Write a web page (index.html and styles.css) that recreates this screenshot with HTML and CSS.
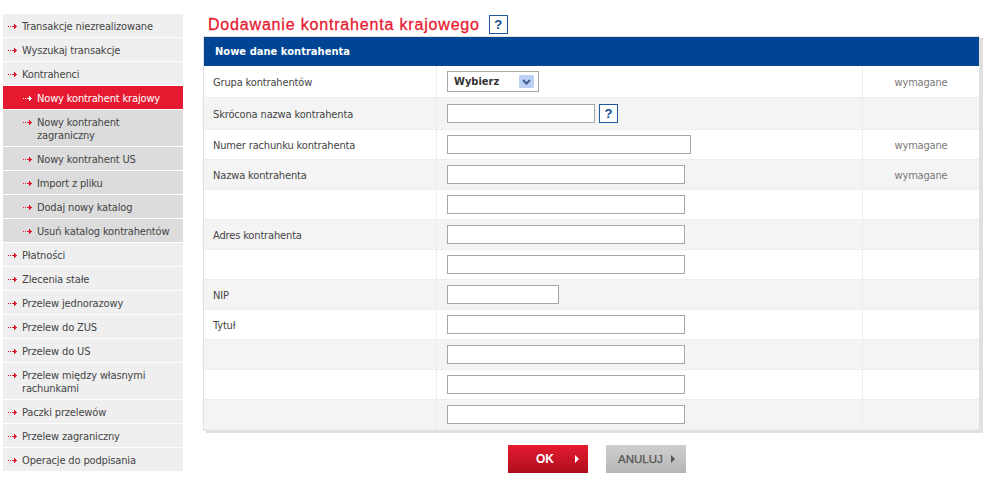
FILE: index.html
```html
<!DOCTYPE html>
<html lang="pl">
<head>
<meta charset="utf-8">
<title>Dodawanie kontrahenta krajowego</title>
<link rel="stylesheet" href="styles.css">
</head>
<body>
<svg class="defs" width="0" height="0" aria-hidden="true"><defs><symbol id="arr" viewBox="0 0 9 7"><path d="M0 3h1v1H0zM2 3h1v1H2zM4 3h2V1h1v1h1v1h1v1H8v1H7v1H6V4H4z"/></symbol></defs></svg>
<div class="page">
  <nav class="side">
    <a class="item"><svg class="arr"><use href="#arr"/></svg><span>Transakcje niezrealizowane</span></a>
    <a class="item"><svg class="arr"><use href="#arr"/></svg><span>Wyszukaj transakcje</span></a>
    <a class="item"><svg class="arr"><use href="#arr"/></svg><span>Kontrahenci</span></a>
    <a class="item sub active"><svg class="arr"><use href="#arr"/></svg><span>Nowy kontrahent krajowy</span></a>
    <a class="item sub"><svg class="arr"><use href="#arr"/></svg><span>Nowy kontrahent<br>zagraniczny</span></a>
    <a class="item sub"><svg class="arr"><use href="#arr"/></svg><span>Nowy kontrahent US</span></a>
    <a class="item sub"><svg class="arr"><use href="#arr"/></svg><span>Import z pliku</span></a>
    <a class="item sub"><svg class="arr"><use href="#arr"/></svg><span>Dodaj nowy katalog</span></a>
    <a class="item sub"><svg class="arr"><use href="#arr"/></svg><span>Usuń katalog kontrahentów</span></a>
    <a class="item"><svg class="arr"><use href="#arr"/></svg><span>Płatności</span></a>
    <a class="item"><svg class="arr"><use href="#arr"/></svg><span>Zlecenia stałe</span></a>
    <a class="item"><svg class="arr"><use href="#arr"/></svg><span>Przelew jednorazowy</span></a>
    <a class="item"><svg class="arr"><use href="#arr"/></svg><span>Przelew do ZUS</span></a>
    <a class="item"><svg class="arr"><use href="#arr"/></svg><span>Przelew do US</span></a>
    <a class="item"><svg class="arr"><use href="#arr"/></svg><span>Przelew między własnymi<br>rachunkami</span></a>
    <a class="item"><svg class="arr"><use href="#arr"/></svg><span>Paczki przelewów</span></a>
    <a class="item"><svg class="arr"><use href="#arr"/></svg><span>Przelew zagraniczny</span></a>
    <a class="item"><svg class="arr"><use href="#arr"/></svg><span>Operacje do podpisania</span></a>
  </nav>
  <main class="main">
    <div class="title-row">
      <h1>Dodawanie kontrahenta krajowego</h1>
      <span class="help">?</span>
    </div>
    <section class="panel">
      <h2>Nowe dane kontrahenta</h2>
      <div class="row tall"><div class="c1">Grupa kontrahentów</div><div class="c2"><div class="select"><b>Wybierz</b><span class="sel-btn"><svg width="9" height="6" viewBox="0 0 9 6"><path d="M1 1l3.5 3.5L8 1" fill="none" stroke="#3f5f8f" stroke-width="2"/></svg></span></div></div><div class="c3">wymagane</div></div>
      <div class="row tall alt low"><div class="c1">Skrócona nazwa kontrahenta</div><div class="c2"><div class="field w148"></div><span class="help small">?</span></div><div class="c3"></div></div>
      <div class="row"><div class="c1">Numer rachunku kontrahenta</div><div class="c2"><div class="field w244"></div></div><div class="c3">wymagane</div></div>
      <div class="row alt"><div class="c1">Nazwa kontrahenta</div><div class="c2"><div class="field w238"></div></div><div class="c3">wymagane</div></div>
      <div class="row"><div class="c1"></div><div class="c2"><div class="field w238"></div></div><div class="c3"></div></div>
      <div class="row alt"><div class="c1">Adres kontrahenta</div><div class="c2"><div class="field w238"></div></div><div class="c3"></div></div>
      <div class="row"><div class="c1"></div><div class="c2"><div class="field w238"></div></div><div class="c3"></div></div>
      <div class="row alt"><div class="c1">NIP</div><div class="c2"><div class="field w112"></div></div><div class="c3"></div></div>
      <div class="row"><div class="c1">Tytuł</div><div class="c2"><div class="field w238"></div></div><div class="c3"></div></div>
      <div class="row alt"><div class="c1"></div><div class="c2"><div class="field w238"></div></div><div class="c3"></div></div>
      <div class="row"><div class="c1"></div><div class="c2"><div class="field w238"></div></div><div class="c3"></div></div>
      <div class="row alt"><div class="c1"></div><div class="c2"><div class="field w238"></div></div><div class="c3"></div></div>
    </section>
    <div class="buttons">
      <a class="btn ok"><span>OK</span><i></i></a>
      <a class="btn cancel"><span>ANULUJ</span><i></i></a>
    </div>
  </main>
</div>
</body>
</html>
```
FILE: styles.css
```css
* { box-sizing: border-box; }
html, body { margin: 0; background: #fff; }
body { font-family: "DejaVu Sans", "Liberation Sans", sans-serif; font-stretch: condensed; font-size: 11px; color: #444; height: 480px; overflow: hidden; }
.defs { position: absolute; }
.page { display: flex; align-items: flex-start; padding: 14px 0 0 3px; }

.side { width: 180px; flex: none; display: flex; flex-direction: column; gap: 1px; }
.item { display: flex; background: #efefef; padding: 6px 8px 4px 5px; line-height: 13px; min-height: 23px; letter-spacing: -.15px; }
.item span { display: block; }
.arr { width: 9px; height: 7px; margin: 3px 5px 0 0; fill: #e4182f; flex: none; }
.item.sub { background: #dcdcdc; padding-left: 20px; }
.item.active { background: #e51a30; color: #fff; }
.item.active .arr { fill: #fff; }

.main { width: 780px; margin-left: 21px; }
.title-row { display: flex; align-items: center; height: 21px; margin-bottom: 1px; padding-left: 4px; gap: 9px; }
h1 { margin: 0; font-family: "Liberation Sans", Arial, sans-serif; font-stretch: normal; font-size: 16px; line-height: 21px; font-weight: 400; color: #e51a30; letter-spacing: .82px; -webkit-text-stroke: .3px #e51a30; }
.help { width: 19px; height: 19px; border: 1px solid #1f5a9d; color: #0e4a90; font-family: "Liberation Sans", Arial, sans-serif; font-stretch: normal; font-weight: 700; font-size: 13px; line-height: 17px; text-align: center; background: #fff; }
.help.small { margin-left: 4px; }

.panel { width: 777px; margin-left: -1px; border: 1px solid #e2e2dc; box-shadow: 3px 2px 0 #e0e0e0; background: #fff; }
.panel h2 { margin: 0; height: 29px; background: #004494; color: #fff; font-size: 11px; font-weight: 700; line-height: 29px; padding-left: 11px; letter-spacing: .05px; }
.row { display: grid; grid-template-columns: 233px 426px 116px; height: 30px; background: #fff; border-bottom: 1px solid #ededed; }
.row.tall { height: 32px; }
.row.alt { background: #f4f4f4; }
.c1 { padding: 0 0 0 9px; line-height: 32px; letter-spacing: -.15px; border-right: 1px solid #ededed; height: 100%; }
.c2 { display: flex; align-items: flex-start; padding: 5px 0 0 10px; border-right: 1px solid #ededed; height: 100%; }
.row.low .c2 { padding-top: 6px; }
.c3 { text-align: center; line-height: 32px; color: #777; letter-spacing: -.2px; }
.row.tall .c1 { line-height: 34px; }
.row.tall .c3 { line-height: 34px; }
.field { height: 19px; background: #fff; border: 1px solid #a6a6a6; }
.w148 { width: 148px; }
.w244 { width: 244px; }
.w238 { width: 238px; }
.w112 { width: 112px; }
.select { width: 92px; height: 21px; border: 1px solid #a6a6a6; background: #fff; display: flex; align-items: center; justify-content: space-between; padding: 0 4px 0 6px; }
.select b { font-size: 11px; color: #333; }
.sel-btn { width: 15px; height: 13px; background: #bcd0f4; display: flex; align-items: center; justify-content: center; border-radius: 1px; }

.buttons { display: flex; justify-content: center; gap: 18px; margin-top: 14px; padding-left: 6px; }
.btn { position: relative; width: 80px; height: 28px; display: block; font-family: "Liberation Sans", Arial, sans-serif; font-stretch: normal; font-size: 12px; line-height: 28px; font-weight: 700; }
.btn i { position: absolute; top: 10px; width: 0; height: 0; border-left: 4px solid currentColor; border-top: 4px solid transparent; border-bottom: 4px solid transparent; }
.ok { background: linear-gradient(#e51a30, #ae0f1c); color: #fff; }
.ok span { position: absolute; left: 28px; }
.ok i { left: 67px; }
.cancel { background: linear-gradient(#cfcfcf, #b5b5b5); color: #555; }
.cancel span { position: absolute; left: 12px; font-size: 11.5px; font-weight: 400; -webkit-text-stroke: .25px #555; }
.cancel i { left: 65px; }
```
